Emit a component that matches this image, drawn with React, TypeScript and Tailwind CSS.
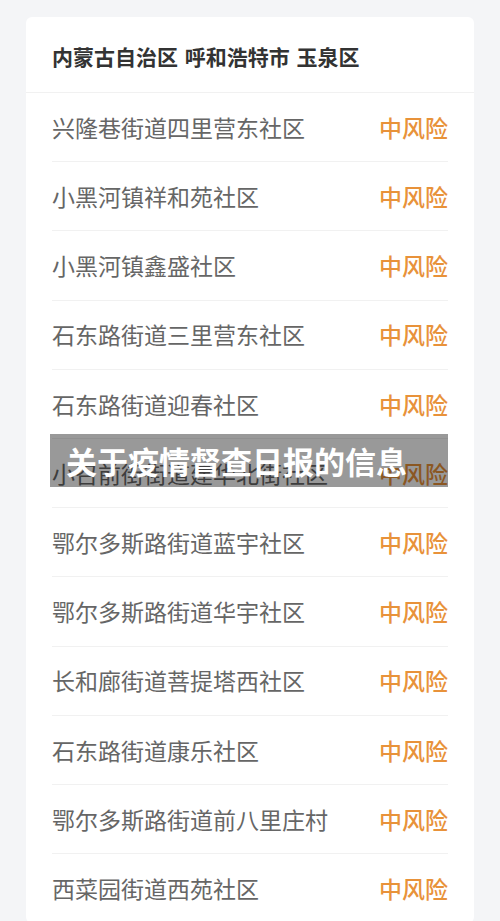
const rows = [
  "兴隆巷街道四里营东社区",
  "小黑河镇祥和苑社区",
  "小黑河镇鑫盛社区",
  "石东路街道三里营东社区",
  "石东路街道迎春社区",
  "小召前街街道建华北街社区",
  "鄂尔多斯路街道蓝宇社区",
  "鄂尔多斯路街道华宇社区",
  "长和廊街道菩提塔西社区",
  "石东路街道康乐社区",
  "鄂尔多斯路街道前八里庄村",
  "西菜园街道西苑社区",
];

export default function App() {
  return (
    <div className="relative h-[921px] overflow-hidden bg-[#f4f5f7] pt-[17px] font-['Noto_Sans_CJK_SC',sans-serif]">
      <div className="mx-[26px] rounded-md bg-white">
        <div className="flex h-[76px] items-center border-b border-[#f1f1f1] px-[26px] pt-[5px]">
          <h2 className="text-[21px] font-bold text-[#333] [word-spacing:2px]">内蒙古自治区 呼和浩特市 玉泉区</h2>
        </div>
        <ul className="px-[26px]">
          {rows.map((name) => (
            <li
              key={name}
              className="flex h-[69.2px] items-center justify-between border-b border-[#f1f1f1] text-[23px]"
            >
              <span className="text-[#666]">{name}</span>
              <span className="font-medium text-[#e8923a]">中风险</span>
            </li>
          ))}
        </ul>
      </div>

      <div className="absolute left-[50px] top-[434px] flex h-[53px] w-[398px] items-center bg-black/40 pl-[16px]">
        <span className="text-[31px] font-bold leading-none text-white">关于疫情督查日报的信息</span>
      </div>
    </div>
  );
}
